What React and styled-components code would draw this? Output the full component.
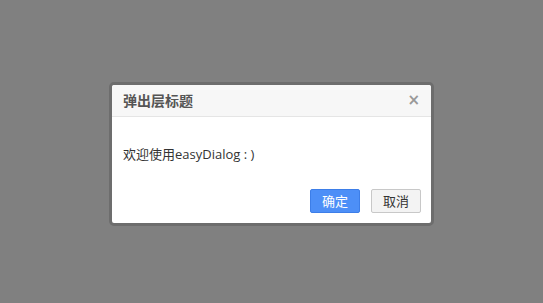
import { createGlobalStyle, styled } from "styled-components";

const GlobalStyle = createGlobalStyle`
   html, body {
      margin: 0;
      height: 100%;
   }
   body {
      background-color: #808080;
      font-family: "Open Sans", "Noto Sans CJK SC", sans-serif;
   }
   #root {
      height: 100%;
   }
`;

const Overlay = styled.div`
   height: 100vh;
   display: flex;
   justify-content: center;
   align-items: center;
   padding-top: 4px;
   box-sizing: border-box;
`;

const Dialog = styled.div`
   width: 319px;
   border: 3px solid #6d6d6d;
   border-radius: 5px;
   background-color: #fff;
   overflow: hidden;
`;

const Header = styled.div`
   height: 31px;
   display: flex;
   align-items: center;
   justify-content: space-between;
   padding: 0 11px;
   background-color: #f7f7f7;
   border-bottom: 1px solid #e5e5e5;
   border-radius: 2px 2px 0 0;
`;

const Title = styled.h3`
   margin: 0;
   font-family: "Noto Sans CJK SC", sans-serif;
   font-size: 14px;
   font-weight: bold;
   color: #555;
`;

const Close = styled.span`
   font-family: "DejaVu Sans", sans-serif;
   font-size: 15px;
   font-weight: bold;
   color: #999;
   line-height: 1;
   cursor: pointer;
`;

const Body = styled.div`
   padding: 28px 11px 26px;
   font-size: 13px;
   color: #333;
   line-height: 18px;
`;

const Footer = styled.div`
   display: flex;
   justify-content: flex-end;
   gap: 11px;
   padding: 0 10px 10px;
`;

const Button = styled.button`
   width: 50px;
   height: 24px;
   padding: 0;
   font-family: "Noto Sans CJK SC", sans-serif;
   font-size: 13px;
   border-radius: 2px;
   border: 1px solid ${({ $primary }) => ($primary ? "#3d7ee8" : "#c8c8c8")};
   background-color: ${({ $primary }) => ($primary ? "#4d8ff7" : "#f3f3f3")};
   color: ${({ $primary }) => ($primary ? "#fff" : "#333")};
   cursor: pointer;
`;

const App = () => {
   return (
      <>
         <GlobalStyle />
         <Overlay>
            <Dialog>
               <Header>
                  <Title>弹出层标题</Title>
                  <Close>×</Close>
               </Header>
               <Body>欢迎使用easyDialog : )</Body>
               <Footer>
                  <Button $primary>确定</Button>
                  <Button>取消</Button>
               </Footer>
            </Dialog>
         </Overlay>
      </>
   );
};

export default App;
